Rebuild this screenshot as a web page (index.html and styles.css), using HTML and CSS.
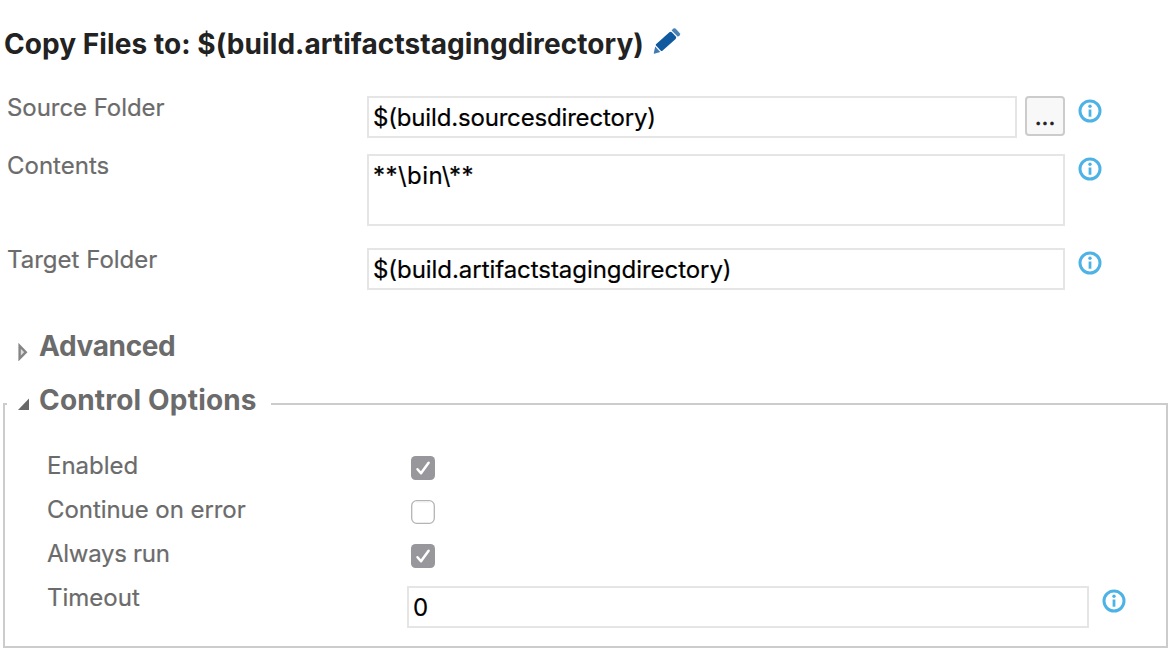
FILE: index.html
```html
<!DOCTYPE html>
<html lang="en">
<head>
<meta charset="utf-8">
<title>Copy Files</title>
<link rel="stylesheet" href="styles.css">
</head>
<body>
<svg class="defs" width="0" height="0" aria-hidden="true">
  <symbol id="info" viewBox="0 0 24 24">
    <circle cx="12" cy="12" r="10" fill="none" stroke="#4db3e6" stroke-width="3"/>
    <circle cx="12" cy="7.3" r="1.7" fill="#4db3e6"/>
    <path d="M10.6 10.5h2.8v7.2h-2.8z" fill="#4db3e6"/>
  </symbol>
</svg>
<main class="task">
  <header class="title">
    <h1 class="title-text">Copy Files to: $(build.artifactstagingdirectory)</h1>
    <svg class="pencil" viewBox="0 0 28 28" fill="#10599f">
      <path d="M3 17.2 16.4 5.2Q17.8 4.2 19 5.4L22.8 9.4Q23.8 10.6 22.6 11.9L9.4 23.7Q8.5 24.3 7.6 23.4L3 18.6Q2.4 17.8 3 17.2z"/>
      <path d="M2.2 19.6 7.3 25 1.2 26.8Q.7 26.6.8 26z" opacity=".8"/>
      <path d="M18.6 3.4 20.3 1.6Q21.4.8 22.5 1.6L26.8 6.2Q27.6 7.2 26.7 8.2L24.9 9.8z" opacity=".75"/>
    </svg>
  </header>

  <section class="fields">
    <div class="field">
      <label class="label source">Source Folder</label>
      <div class="input source-value">$(build.sourcesdirectory)</div>
      <button class="browse">...</button>
      <svg class="info"><use href="#info"/></svg>
    </div>
    <div class="field tall">
      <label class="label contents">Contents</label>
      <div class="input contents-value">**\bin\**</div>
      <svg class="info"><use href="#info"/></svg>
    </div>
    <div class="field">
      <label class="label target">Target Folder</label>
      <div class="input target-value">$(build.artifactstagingdirectory)</div>
      <svg class="info"><use href="#info"/></svg>
    </div>
  </section>

  <div class="group-head">
    <svg class="arrow" viewBox="0 0 12 18"><path d="M1.6 2.8 7.8 9.2 1.6 15.5z" fill="#ddd" stroke="#858585" stroke-width="2.4"/></svg>
    <h2 class="group-title advanced">Advanced</h2>
  </div>

  <fieldset class="group">
    <legend class="legend">
      <svg class="arrow" viewBox="0 0 12 18"><path d="M0 16 11 4.5V16z" fill="#686868"/></svg>
      <span class="group-title control">Control Options</span>
    </legend>
    <div class="options">
      <div class="option"><span class="label">Enabled</span>
        <svg class="check" viewBox="0 0 24 24"><rect width="24" height="24" rx="4.5" fill="#98979c"/><path d="M6.5 13.2 10 17.3 17.6 6.7" fill="none" stroke="#fff" stroke-width="2.5" stroke-linecap="round" stroke-linejoin="round"/></svg></div>
      <div class="option"><span class="label continue">Continue on error</span>
        <svg class="check" viewBox="0 0 24 24"><rect x=".7" y=".7" width="22.6" height="22.6" rx="5" fill="#fff" stroke="#b4b4b4" stroke-width="1.3"/><path d="M4.5 2H19.5" stroke="#eee"/></svg></div>
      <div class="option"><span class="label always">Always run</span>
        <svg class="check" viewBox="0 0 24 24"><rect width="24" height="24" rx="4.5" fill="#98979c"/><path d="M6.5 13.2 10 17.3 17.6 6.7" fill="none" stroke="#fff" stroke-width="2.5" stroke-linecap="round" stroke-linejoin="round"/></svg></div>
      <div class="option timeout"><span class="label">Timeout</span>
        <div class="input">0</div>
        <svg class="info"><use href="#info"/></svg></div>
    </div>
  </fieldset>
</main>
</body>
</html>
```
FILE: styles.css
```css
* { box-sizing: border-box; }
body { margin: 0; background: #fff; font-family: Inter, "Liberation Sans", sans-serif; font-size: 24px; }
.defs { display: block; }
.task { height: 668px; overflow: hidden; }
.title { display: flex; align-items: flex-start; height: 96px; padding: 27px 0 0 4px; gap: 9px; }
.title-text { margin: 0; font-size: 28px; line-height: 34px; font-weight: 700; letter-spacing: .07px; color: #222; white-space: nowrap; }
.pencil { width: 28px; height: 28px; }
.fields { display: flex; flex-direction: column; gap: 16px; padding-left: 7px; height: 220px; }
.field { display: flex; align-items: flex-start; width: 1095px; height: 42px; }
.field.tall { height: 72px; margin-bottom: 6px; }
.label { flex: none; width: 360px; line-height: 30px; margin-top: -3px; color: #6b6b6b; -webkit-text-stroke: .2px #6b6b6b; letter-spacing: 0; white-space: nowrap; }
.source, .continue { letter-spacing: -.06px; }
.always { letter-spacing: -.28px; }
.input { flex: 1; align-self: stretch; border: 2px solid #e5e5e5; padding: 5px 5px 0 4px; line-height: 30px; color: #000; -webkit-text-stroke: .2px #000; white-space: nowrap; }
.source-value { letter-spacing: -.17px; }
.contents-value { letter-spacing: .45px; }
.target-value { letter-spacing: -.05px; }
.browse { width: 40px; height: 40px; margin-left: 8px; padding: 2px 0 0; border: 2px solid #ccc; border-radius: 4px; background: #f8f8f8; font: 24px/28px Inter, sans-serif; color: #222; -webkit-text-stroke: .4px #222; }
.info { flex: none; width: 24px; height: 24px; margin: 3px 0 0 13px; }
.group-head { display: flex; align-items: flex-start; height: 67px; padding: 13px 0 0 18px; }
.arrow { flex: none; width: 12px; height: 18px; margin: 14px 9px 0 0; }
.group-title { margin: 0; font-size: 28px; line-height: 34px; font-weight: 700; color: #6b6b6b; white-space: nowrap; }
.advanced { letter-spacing: -.35px; }
.control { letter-spacing: .18px; }
.group { margin: 0 0 0 3px; width: 1165px; height: 265px; border: 2px solid #ccc; padding: 0; min-width: 0; }
.legend { display: flex; width: 264px; height: 42px; margin-left: 2px; padding: 0 0 0 11px; }
.legend .arrow { margin-top: 11px; }
.options { padding: 29px 0 0 42px; }
.option { display: flex; height: 44px; }
.check { width: 24px; height: 24px; margin: 2px 0 0 4px; }
.timeout { width: 1079px; height: 42px; }
```
